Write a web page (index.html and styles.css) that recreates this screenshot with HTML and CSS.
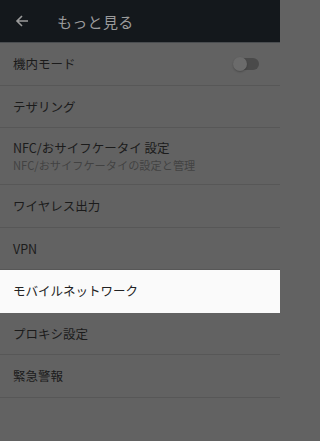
FILE: index.html
```html
<!DOCTYPE html>
<html lang="ja">
<head>
<meta charset="utf-8">
<link rel="stylesheet" href="styles.css">
</head>
<body>
<div class="screen">
  <header class="bar">
    <svg class="back" width="14" height="14" viewBox="0 0 14 14"><path d="M13 7H2M7 2L2 7l5 5" fill="none" stroke="#9a9a9a" stroke-width="1.6"/></svg>
    <span class="title">もっと見る</span>
  </header>
  <div class="row"><span class="label">機内モード</span><span class="toggle"><span class="thumb"></span></span></div>
  <div class="row"><span class="label">テザリング</span></div>
  <div class="row two"><div class="texts"><span class="label">NFC/おサイフケータイ 設定</span><span class="sub">NFC/おサイフケータイの設定と管理</span></div></div>
  <div class="row"><span class="label">ワイヤレス出力</span></div>
  <div class="row"><span class="label">VPN</span></div>
  <div class="row active"><span class="label">モバイルネットワーク</span></div>
  <div class="row"><span class="label">プロキシ設定</span></div>
  <div class="row"><span class="label">緊急警報</span></div>
</div>
</body>
</html>
```
FILE: styles.css
```css
html { background: #626262; }
html, body { margin: 0; padding: 0; }
body {
  width: 280px; height: 441px; overflow: hidden;
  background: #626262;
  font-family: "Noto Sans CJK JP", "Noto Sans", sans-serif;
}
.screen { display: flex; flex-direction: column; }
.bar {
  height: 43px; background: #14181c;
  display: flex; align-items: center;
  border-bottom: 1px solid #4a4d50;
  box-sizing: border-box;
}
.back { margin-left: 15px; margin-right: 28px; }
.title { color: #9c9c9c; font-size: 15px; letter-spacing: 0.3px; }
.row {
  height: 42.5px; box-sizing: border-box;
  border-bottom: 1px solid #575757;
  display: flex; align-items: center; justify-content: space-between;
  padding: 0 13px;
}
.row.two { height: 57px; }
.row.active { background: #fafafa; border-bottom-color: #fafafa; }
.label { color: #1b1b1b; font-size: 12.5px; }
.active .label { color: #222; }
.texts { display: flex; flex-direction: column; }
.texts .label { line-height: 18px; }
.sub { color: #424242; font-size: 11.2px; line-height: 16px; }
.toggle {
  position: relative; width: 22px; height: 12px; border-radius: 6px;
  background: #4a4a4a; margin-right: 8px;
}
.thumb {
  position: absolute; left: -4px; top: -1px; width: 14px; height: 14px;
  border-radius: 50%; background: #6b6b6b;
  box-shadow: 0 1px 2px rgba(0,0,0,0.25);
}
```
